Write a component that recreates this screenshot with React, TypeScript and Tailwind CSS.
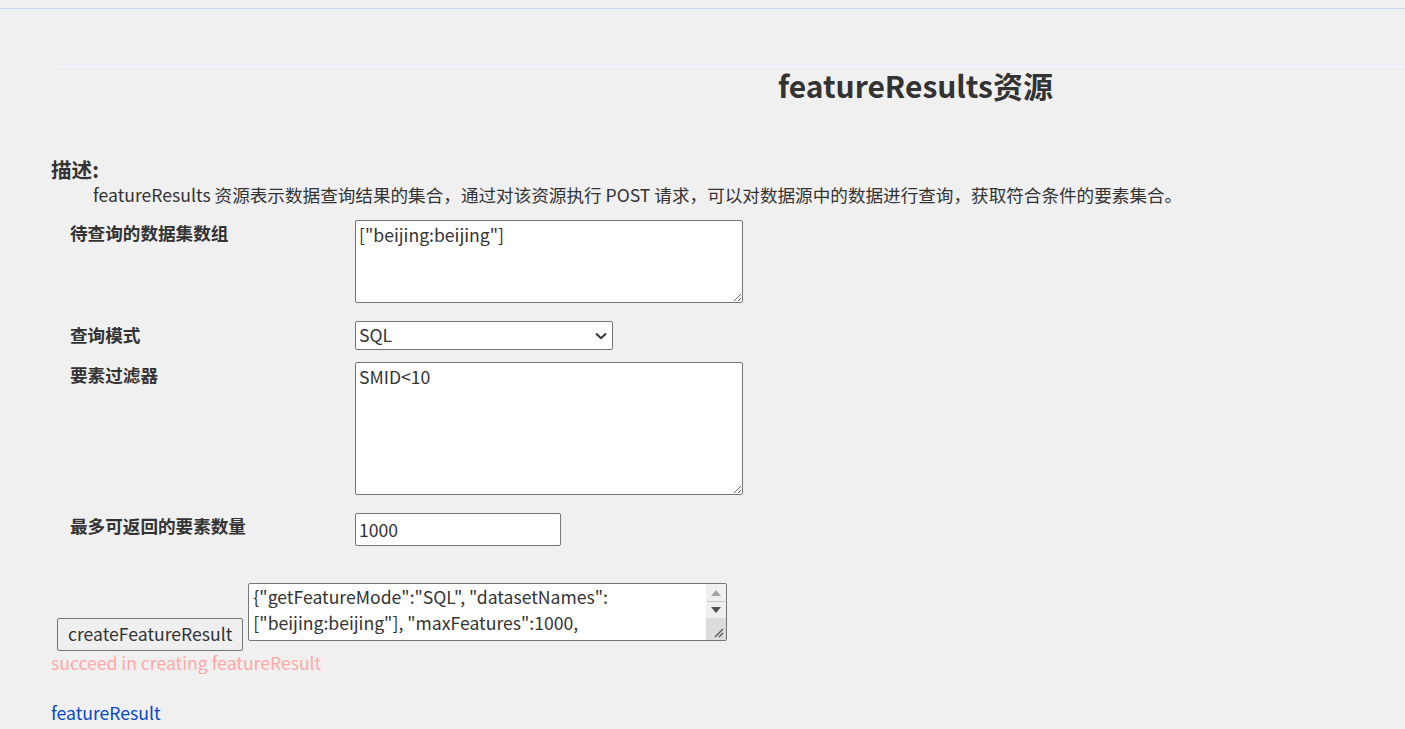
const font = { fontFamily: '"Noto Sans CJK SC", "Noto Sans", sans-serif' };

const fieldCls =
  "bg-white border border-[#767676] rounded-[2px] text-[17.6px] text-[#333] px-[3px] outline-none";

// classic scrollbar drawn over the result textarea
const FakeScrollbar = () => (
  <div className="absolute right-[1px] top-[1px] bottom-[1px] w-[20px] flex flex-col bg-[#f0f0f0]">
    <div className="h-[17px] flex items-center justify-center">
      <svg width="10" height="6" viewBox="0 0 10 6">
        <path d="M0 6 L5 0 L10 6 Z" fill="#a3a3a3" />
      </svg>
    </div>
    <div className="mx-[1px] h-[1px] bg-[#c8c8c8]" />
    <div className="h-[16px] flex items-center justify-center">
      <svg width="10" height="6" viewBox="0 0 10 6">
        <path d="M0 0 L5 6 L10 0 Z" fill="#505050" />
      </svg>
    </div>
    <div className="flex-1 bg-[#dcdcdc] flex items-end justify-end pr-[2px] pb-[2px]">
      <svg width="10" height="10" viewBox="0 0 10 10">
        <path d="M9 1 L1 9 M9 5 L5 9" stroke="#555" strokeWidth="1.3" />
      </svg>
    </div>
  </div>
);

export default function App() {
  return (
    <div className="min-h-screen bg-[#f0f0f0] text-[#333]" style={font}>
      <div className="h-2" />
      <div className="border-t border-[#c6d9f1]" />

      <div className="ml-[52px] mt-[55px] border-t border-[#e4eefa]">
        {/* title */}
        <h1 className="pl-[726px] text-[30px] font-bold leading-[40px] text-[#333]">
          featureResults资源
        </h1>

        {/* description */}
        <h3 className="-ml-[1px] mt-[50px] text-[20.6px] font-bold leading-[28px]">描述:</h3>
        <p className="pl-[41px] text-[17.6px] leading-[24px]">
          featureResults 资源表示数据查询结果的集合，通过对该资源执行 POST 请求，可以对数据源中的数据进行查询，获取符合条件的要素集合。
        </p>

        {/* form */}
        <div className="mt-[13px] pl-[18px] flex flex-col">
          <div className="flex">
            <label className="w-[285px] pt-[1px] text-[17.6px] font-bold leading-[24px]">待查询的数据集数组</label>
            <textarea
              className={`${fieldCls} w-[388px] h-[83px] leading-[24px] pt-[2px]`}
              defaultValue={'["beijing:beijing"]'}
            />
          </div>

          <div className="flex mt-[18px]">
            <label className="w-[285px] pt-[2px] text-[17.6px] font-bold leading-[24px]">查询模式</label>
            <div className="relative">
              <select className={`${fieldCls} block appearance-none w-[258px] h-[29px]`} defaultValue="SQL">
                <option value="SQL">SQL</option>
                <option value="ID">ID</option>
                <option value="BOUNDS">BOUNDS</option>
                <option value="BUFFER">BUFFER</option>
                <option value="SPATIAL">SPATIAL</option>
              </select>
              <svg
                className="absolute right-[6px] top-[11px] pointer-events-none"
                width="12"
                height="8"
                viewBox="0 0 12 8"
              >
                <path d="M1 1.5 L6 6.2 L11 1.5" fill="none" stroke="#333" strokeWidth="2" />
              </svg>
            </div>
          </div>

          <div className="flex mt-[12px]">
            <label className="w-[285px] pt-[1px] text-[17.6px] font-bold leading-[24px]">要素过滤器</label>
            <textarea
              className={`${fieldCls} w-[388px] h-[133px] leading-[24px] pt-[2px]`}
              defaultValue="SMID<10"
            />
          </div>

          <div className="flex mt-[18px]">
            <label className="w-[285px] pt-[1px] text-[17.6px] font-bold leading-[24px]">最多可返回的要素数量</label>
            <input className={`${fieldCls} w-[206px] h-[33px]`} defaultValue="1000" />
          </div>
        </div>

        {/* submit */}
        <div className="mt-[37px] flex items-end">
          <button className="ml-[5px] mb-[-10px] h-[33px] px-[10px] bg-[#efefef] border border-[#767676] rounded-[2px] text-[17.6px] text-[#333]">
            createFeatureResult
          </button>
          <div className="relative ml-[5px]">
            <textarea
              className={`${fieldCls} block w-[479px] h-[58px] leading-[26px] pl-[4px] pr-[22px] overflow-hidden`}
              defaultValue={
                '{"getFeatureMode":"SQL", "datasetNames":["beijing:beijing"], "maxFeatures":1000, "attributeFilter":"SMID<10"}'
              }
            />
            <FakeScrollbar />
          </div>
        </div>
        <p className="mt-[10px] -ml-[1px] text-[17.6px] leading-[24px] text-[#ffa8a8]">
          succeed in creating featureResult
        </p>

        <a href="#" className="mt-[26px] block -ml-[1px] text-[17.6px] leading-[24px] text-[#0645c8]">
          featureResult
        </a>
      </div>
    </div>
  );
}
